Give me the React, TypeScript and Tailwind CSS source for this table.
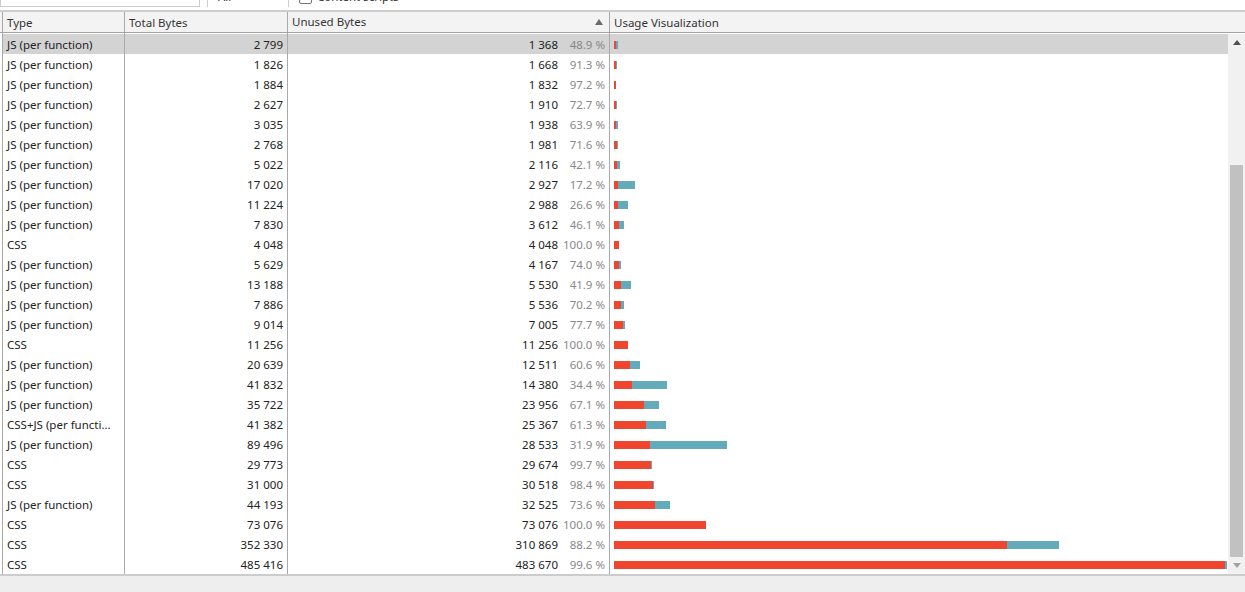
import React from "react";

type Row = [string, number, number, string];

const rows: Row[] = [
  ["JS (per function)", 2799, 1368, "48.9"],
  ["JS (per function)", 1826, 1668, "91.3"],
  ["JS (per function)", 1884, 1832, "97.2"],
  ["JS (per function)", 2627, 1910, "72.7"],
  ["JS (per function)", 3035, 1938, "63.9"],
  ["JS (per function)", 2768, 1981, "71.6"],
  ["JS (per function)", 5022, 2116, "42.1"],
  ["JS (per function)", 17020, 2927, "17.2"],
  ["JS (per function)", 11224, 2988, "26.6"],
  ["JS (per function)", 7830, 3612, "46.1"],
  ["CSS", 4048, 4048, "100.0"],
  ["JS (per function)", 5629, 4167, "74.0"],
  ["JS (per function)", 13188, 5530, "41.9"],
  ["JS (per function)", 7886, 5536, "70.2"],
  ["JS (per function)", 9014, 7005, "77.7"],
  ["CSS", 11256, 11256, "100.0"],
  ["JS (per function)", 20639, 12511, "60.6"],
  ["JS (per function)", 41832, 14380, "34.4"],
  ["JS (per function)", 35722, 23956, "67.1"],
  ["CSS+JS (per function)", 41382, 25367, "61.3"],
  ["JS (per function)", 89496, 28533, "31.9"],
  ["CSS", 29773, 29674, "99.7"],
  ["CSS", 31000, 30518, "98.4"],
  ["JS (per function)", 44193, 32525, "73.6"],
  ["CSS", 73076, 73076, "100.0"],
  ["CSS", 352330, 310869, "88.2"],
  ["CSS", 485416, 483670, "99.6"],
];

const MAX = 485416;
const SCALE = 613 / MAX;

const fmt = (n: number) =>
  n.toString().replace(/\B(?=(\d{3})+(?!\d))/g, "\u00a0");

function DataRow({ row, selected }: { row: Row; selected: boolean }) {
  const [type, total, unused, pct] = row;
  return (
    <div
      className={`flex h-[20px] leading-[22px] ${
        selected ? "bg-[#d3d3d3]" : "bg-white"
      }`}
    >
      <div className="w-[122px] shrink-0 border-r border-[#aaaaaa] pl-[4px] pr-[7px] truncate">
        {type}
      </div>
      <div className="w-[163px] shrink-0 border-r border-[#aaaaaa] px-[4px] text-right overflow-hidden">
        {fmt(total)}
      </div>
      <div className="w-[322px] shrink-0 border-r border-[#aaaaaa] px-[4px] flex justify-end overflow-hidden">
        <span>{fmt(unused)}</span>
        <span className="w-[47px] text-right text-[#888888] whitespace-nowrap">
          {pct}&nbsp;%
        </span>
      </div>
      <div className="flex-1 flex items-center pl-[4px] pt-[1px]">
        <div
          className="h-[8px] bg-[#f0452f] shrink-0"
          style={{ width: `${unused * SCALE}px` }}
        />
        <div
          className="h-[8px] bg-[#63abbb] shrink-0"
          style={{ width: `${(total - unused) * SCALE}px` }}
        />
      </div>
    </div>
  );
}

export default function App() {
  return (
    <div
      className="w-[1245px] h-[592px] bg-white overflow-hidden flex flex-col text-[11.5px] text-[#222222]"
      style={{ fontFamily: '"Noto Sans", "Open Sans", sans-serif' }}
    >
      {/* toolbar (partially scrolled off) */}
      <div className="h-[10px] overflow-hidden shrink-0">
        <div className="h-[26px] -mt-[16px] flex items-center">
          <div className="w-[200px] h-[20px] border border-[#cccccc] bg-white shrink-0" />
          <div className="ml-[7px] w-px h-[20px] bg-[#cccccc]" />
          <div className="ml-[10px] w-[70px] flex items-center text-[#333333]">
            <span>All</span>
            <svg className="ml-auto mr-[6px]" width="8" height="5" viewBox="0 0 8 5">
              <path d="M0.5 0.5 L4 4 L7.5 0.5" fill="none" stroke="#666" strokeWidth="1.2" />
            </svg>
          </div>
          <div className="w-px h-[20px] bg-[#cccccc]" />
          <div className="ml-[10px] w-[13px] h-[13px] border border-[#767676] rounded-[2px] bg-white" />
          <span className="ml-[5px] text-[#333333]">Content scripts</span>
        </div>
      </div>
      <div className="h-[2px] bg-[#cdcdcd] shrink-0" />

      {/* header */}
      <div className="flex h-[21px] shrink-0 bg-[#f3f3f3] border-b border-[#a3a3a3] leading-[22px] text-[#333333]">
        <div className="ml-[2px] w-px bg-[#aaaaaa]" />
        <div className="w-[122px] shrink-0 border-r border-[#aaaaaa] px-[4px] truncate">Type</div>
        <div className="w-[163px] shrink-0 border-r border-[#aaaaaa] px-[4px] truncate">Total Bytes</div>
        <div className="w-[322px] shrink-0 border-r border-[#aaaaaa] pl-[4px] pr-[6px] flex items-center">
          <span>Unused Bytes</span>
          <svg className="ml-auto" width="8" height="6" viewBox="0 0 8 6">
            <path d="M4 0 L8 6 L0 6 Z" fill="#6a6a6a" />
          </svg>
        </div>
        <div className="flex-1 px-[4px] truncate">Usage Visualization</div>
      </div>

      {/* spacer */}
      <div className="flex h-[1px] shrink-0">
        <div className="ml-[2px] w-px bg-[#aaaaaa]" />
        <div className="w-[122px] shrink-0 border-r border-[#aaaaaa]" />
        <div className="w-[163px] shrink-0 border-r border-[#aaaaaa]" />
        <div className="w-[322px] shrink-0 border-r border-[#aaaaaa]" />
      </div>

      {/* body */}
      <div className="flex h-[540px] shrink-0">
        <div className="flex-1 ml-[2px] border-l border-[#aaaaaa] flex flex-col">
          {rows.map((r, i) => (
            <DataRow key={i} row={r} selected={i === 0} />
          ))}
        </div>
        <div className="w-[17px] shrink-0 bg-[#f1f1f1] flex flex-col">
          <div className="h-[17px] flex items-center justify-center">
            <svg width="8" height="5" viewBox="0 0 8 5">
              <path d="M4 0 L8 5 L0 5 Z" fill="#505050" />
            </svg>
          </div>
          <div className="flex-1 flex flex-col justify-end px-[2px]">
            <div className="h-[392px] bg-[#c1c1c1]" />
          </div>
          <div className="h-[17px] flex items-center justify-center">
            <svg width="8" height="5" viewBox="0 0 8 5">
              <path d="M0 0 L8 0 L4 5 Z" fill="#a3a3a3" />
            </svg>
          </div>
        </div>
      </div>

      <div className="h-[2px] bg-[#cccccc] shrink-0" />
      <div className="flex-1 bg-[#eeeeee]" />
    </div>
  );
}
